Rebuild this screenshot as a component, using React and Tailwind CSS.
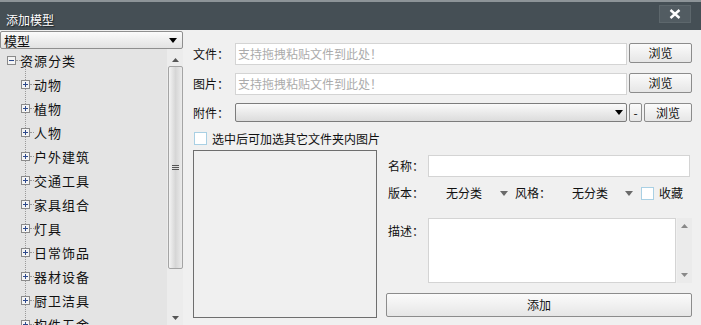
import { useState } from 'react';

const categories = [
  '动物',
  '植物',
  '人物',
  '户外建筑',
  '交通工具',
  '家具组合',
  '灯具',
  '日常饰品',
  '器材设备',
  '厨卫洁具',
  '构件五金',
];

const TreeBox = ({ open }) => (
  <svg width="9" height="9" viewBox="0 0 9 9" className="shrink-0 block">
    <rect x="0.5" y="0.5" width="8" height="8" fill="#f4f4f4" stroke="#8a8a8a" />
    <line x1="2" y1="4.5" x2="7" y2="4.5" stroke="#2e4a8c" />
    {!open && <line x1="4.5" y1="2" x2="4.5" y2="7" stroke="#2e4a8c" />}
  </svg>
);

const Arrow = ({ color = '#000' }) => (
  <svg width="8" height="5" viewBox="0 0 8 5" className="block">
    <path d="M0 0H8L4 5Z" fill={color} />
  </svg>
);

const Button = ({ children, className = '' }) => (
  <button
    type="button"
    className={`flex items-center justify-center border border-[#8c8c8c] rounded-[2px] bg-gradient-to-b from-[#fbfbfb] to-[#e6e6e6] text-[12px] text-[#111] leading-none ${className}`}
  >
    {children}
  </button>
);

const Checkbox = () => (
  <span className="block w-[13px] h-[13px] shrink-0 border border-[#a9d0e4] bg-white" />
);

export default function App() {
  const [model] = useState('模型');

  return (
    <div className="w-[701px] h-[325px] overflow-hidden bg-[#f0f0f0] flex flex-col font-['Noto_Sans_CJK_SC','Liberation_Sans',sans-serif] text-[#111]">
      {/* Title bar */}
      <div className="h-[30px] shrink-0 bg-[#454f55] border-t-[2px] border-[#8d9498] flex items-start justify-between pl-[6px] pr-[10px]">
        <span className="mt-[11px] text-[12px] leading-[14px] text-white [text-shadow:1px_1px_1px_#1a1f22]">添加模型</span>
        <button
          type="button"
          className="mt-[3px] w-[32px] h-[18px] bg-[#525c62] border border-[#5d676c] flex items-center justify-center"
        >
          <svg width="12" height="10" viewBox="0 0 12 10">
            <path d="M1.5 1L10.5 9M10.5 1L1.5 9" stroke="#fff" strokeWidth="2.4" />
          </svg>
        </button>
      </div>

      <div className="flex flex-1 min-h-0">
        {/* Left panel */}
        <div className="w-[183px] shrink-0 flex flex-col">
          <div className="mt-[1px] h-[18px] shrink-0 border border-[#8f8f8f] rounded-[2px] bg-gradient-to-b from-[#fbfbfb] to-[#e2e2e2] flex items-center justify-between pl-[3px] pr-[5px]">
            <span className="text-[13px] leading-none">{model}</span>
            <Arrow />
          </div>
          <div className="flex flex-1 min-h-0">
            <div className="w-[167px] bg-[#e4e4e4] overflow-hidden">
              <div className="-mt-[1px] h-[24px] flex items-center pl-[7px]">
                <TreeBox open />
                <span className="w-[4px] border-t border-dotted border-[#9a9a9a]" />
                <span className="text-[13px] tracking-[1px] leading-none">资源分类</span>
              </div>
              <div className="ml-[25px] border-l border-dotted border-[#9a9a9a] -mt-[6px] pt-[6px]">
                {categories.map((name) => (
                  <div key={name} className="h-[24px] flex items-center -ml-[5px]">
                    <TreeBox />
                    <span className="w-[4px] border-t border-dotted border-[#9a9a9a]" />
                    <span className="text-[13px] tracking-[1px] leading-none">{name}</span>
                  </div>
                ))}
              </div>
            </div>
            {/* Tree scrollbar */}
            <div className="w-[16px] bg-[#ececec] flex flex-col items-center">
              <div className="h-[17px] flex items-end justify-center pb-[4px]">
                <svg width="7" height="4" viewBox="0 0 7 4"><path d="M0 4H7L3.5 0Z" fill="#555" /></svg>
              </div>
              <div className="w-[15px] h-[203px] border border-[#a4a4a4] rounded-[2px] bg-gradient-to-r from-[#f4f4f4] via-[#d6d6d6] to-[#ebebeb] flex items-center justify-center">
                <div className="flex flex-col gap-[1px]">
                  <span className="block w-[7px] h-[1px] bg-[#555]" />
                  <span className="block w-[7px] h-[1px] bg-[#555]" />
                  <span className="block w-[7px] h-[1px] bg-[#555]" />
                </div>
              </div>
              <div className="flex-1 flex items-end pb-[5px]">
                <svg width="7" height="4" viewBox="0 0 7 4"><path d="M0 0H7L3.5 4Z" fill="#555" /></svg>
              </div>
            </div>
          </div>
        </div>

        {/* Right panel */}
        <div className="flex-1 flex flex-col pl-[10px] pr-[9px] pt-[13px]">
          <div className="flex items-center h-[22px]">
            <span className="w-[42px] text-[12px] leading-none">文件：</span>
            <div className="flex-1 h-[22px] bg-white border border-[#d4d4d4] flex items-center pl-[2px] text-[12px] text-[#ababab]">
              支持拖拽粘贴文件到此处！
            </div>
            <Button className="ml-[2px] w-[63px] h-[20px] self-start">浏览</Button>
          </div>
          <div className="flex items-center h-[22px] mt-[8px]">
            <span className="w-[42px] text-[12px] leading-none">图片：</span>
            <div className="flex-1 h-[22px] bg-white border border-[#d4d4d4] flex items-center pl-[2px] text-[12px] text-[#ababab]">
              支持拖拽粘贴文件到此处！
            </div>
            <Button className="ml-[2px] w-[63px] h-[20px] self-start">浏览</Button>
          </div>
          <div className="flex items-center h-[19px] mt-[8px]">
            <span className="w-[42px] text-[12px] leading-none">附件：</span>
            <div className="flex-1 h-[19px] border border-[#7c7c7c] rounded-[2px] bg-gradient-to-b from-[#fafafa] to-[#dcdcdc] flex items-center justify-end pr-[3px]">
              <Arrow />
            </div>
            <Button className="ml-[2px] w-[13px] h-[19px]">-</Button>
            <Button className="ml-[2px] w-[48px] h-[19px]">浏览</Button>
          </div>
          <div className="flex items-center mt-[10px] pl-[1px] h-[13px]">
            <Checkbox />
            <span className="ml-[5px] text-[12px] leading-none">选中后可加选其它文件夹内图片</span>
          </div>

          <div className="flex mt-[5px]">
            <div className="w-[184px] h-[168px] shrink-0 border border-[#6e6e6e] bg-[#f0f0f0]" />
            <div className="flex-1 ml-[9px] flex flex-col">
              <div className="flex items-center h-[22px] mt-[5px]">
                <span className="w-[42px] pl-[2px] text-[12px] leading-none">名称：</span>
                <div className="flex-1 h-[22px] bg-white border border-[#d4d4d4] mr-[2px]" />
              </div>
              <div className="flex items-center h-[20px] mt-[6px] text-[12px] leading-none">
                <span className="w-[42px] pl-[2px]">版本：</span>
                <div className="w-[84px] flex items-center justify-between pl-[18px] pr-[4px]">
                  <span>无分类</span>
                  <Arrow color="#6a6a6a" />
                </div>
                <span className="w-[42px] pl-[3px]">风格：</span>
                <div className="w-[82px] flex items-center justify-between pl-[18px] pr-[3px]">
                  <span>无分类</span>
                  <Arrow color="#6a6a6a" />
                </div>
                <span className="ml-[5px]"><Checkbox /></span>
                <span className="ml-[5px]">收藏</span>
              </div>
              <div className="flex mt-[15px] h-[65px]">
                <span className="w-[42px] pl-[2px] pt-[7px] text-[12px] leading-none">描述：</span>
                <div className="flex-1 bg-white border border-[#d4d4d4]" />
                <div className="w-[15px] ml-[1px] bg-[#ebebeb] flex flex-col items-center justify-between py-[6px]">
                  <svg width="7" height="4" viewBox="0 0 7 4"><path d="M0 4H7L3.5 0Z" fill="#888" /></svg>
                  <svg width="7" height="4" viewBox="0 0 7 4"><path d="M0 0H7L3.5 4Z" fill="#888" /></svg>
                </div>
              </div>
              <Button className="mt-[10px] h-[24px] w-full text-[12px]">添加</Button>
            </div>
          </div>
        </div>
      </div>
    </div>
  );
}
